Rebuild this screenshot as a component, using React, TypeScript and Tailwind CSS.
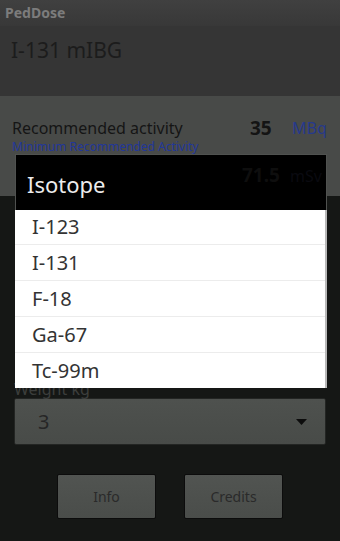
const isotopes = ["I-123", "I-131", "F-18", "Ga-67", "Tc-99m"];

const font = { fontFamily: '"Noto Sans", "Open Sans", sans-serif' };

export default function App() {
  return (
    <div
      className="relative w-[340px] h-[541px] overflow-hidden bg-[#151715]"
      style={font}
    >
      {/* title bar */}
      <div className="h-[26px] flex items-center px-[5px] bg-gradient-to-b from-[#404040] to-[#383838]">
        <span className="text-[14px] font-bold text-[#7c7c7c] leading-none">PedDose</span>
      </div>

      {/* procedure header */}
      <div className="h-[70px] bg-[#353535] px-[11px] pt-[9px]">
        <div className="text-[21px] text-[#1c1c1c] leading-[30px]">I-131 mIBG</div>
      </div>

      {/* result panel */}
      <div className="h-[100px] bg-[#484a48] px-[12px] pt-[21px]">
        <div className="flex items-center h-[22px]">
          <span className="text-[16px] text-[#151515] flex-1">Recommended activity</span>
          <span className="text-[19px] font-bold text-[#141414] w-[42px]">35</span>
          <span className="text-[16px] text-[#26398c] w-[36px]">MBq</span>
        </div>
        <div className="text-[12px] leading-[14px] text-[#22379a] mt-[1px]">
          Minimum Recommended Activity
        </div>
      </div>

      {/* inputs, mostly hidden behind the dialog */}
      <div className="px-[14px]">
        <div className="h-[184px]" />
        <div className="text-[16px] leading-[18px] text-[#3c3e3c]">Weight kg</div>
        <div className="h-[47px] flex items-center justify-between pl-[23px] pr-[18px] rounded-[2px] border border-[#232523] bg-gradient-to-b from-[#4e514e] to-[#484b48]">
          <span className="text-[20px] text-[#262626]">3</span>
          <svg width="11" height="6" viewBox="0 0 11 6">
            <path d="M0 0 H11 L5.5 6 Z" fill="#0c0c0c" />
          </svg>
        </div>

        <div className="mt-[29px] flex justify-center gap-[28px]">
          <button className="w-[99px] h-[45px] rounded-[2px] border border-[#0c0c0c] bg-gradient-to-b from-[#515451] to-[#4a4d4a] text-[14px] text-[#2a2a2a]">
            Info
          </button>
          <button className="w-[99px] h-[45px] rounded-[2px] border border-[#0c0c0c] bg-gradient-to-b from-[#515451] to-[#4a4d4a] text-[14px] text-[#2a2a2a]">
            Credits
          </button>
        </div>
      </div>

      {/* isotope picker dialog */}
      <div className="absolute left-[15px] top-[154px] w-[312px]">
        <div className="relative h-[56px] bg-black border border-b-0 border-[#505250] flex items-center px-[11px]">
          <span className="absolute left-[226px] top-[6px] text-[19px] font-bold text-[#0e0e0e]">71.5</span>
          <span className="absolute left-[274px] top-[9px] text-[16px] text-[#0a0a10]">mSv</span>
          <span className="relative text-[22px] text-[#ececec] pt-[4px]">Isotope</span>
        </div>
        <div className="bg-white border-r-2 border-[#b8b8b8]">
          {isotopes.map((iso, i) => (
            <div
              key={iso}
              className={`flex items-center px-[17px] ${i > 0 ? "h-[36px] border-t border-[#ececec]" : "h-[34px]"}`}
            >
              <span className="text-[20px] text-[#333333]">{iso}</span>
            </div>
          ))}
        </div>
      </div>
    </div>
  );
}
